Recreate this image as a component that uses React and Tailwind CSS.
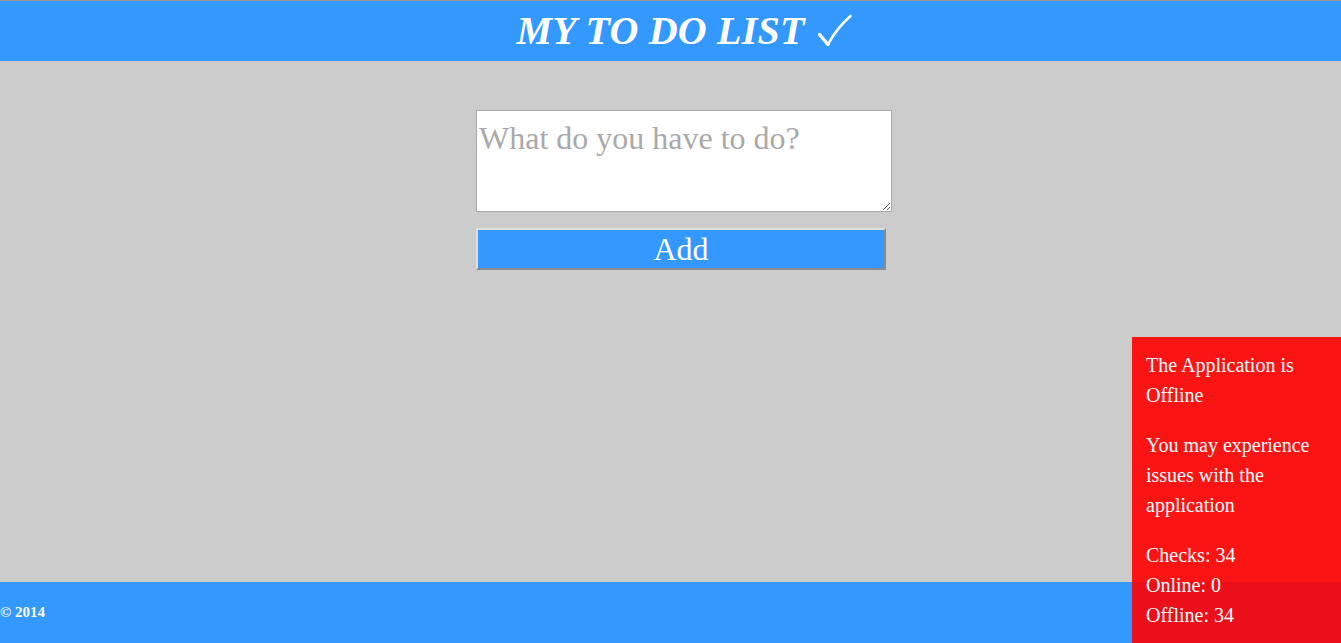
import React from 'react';

const serif = "font-['Liberation_Serif','Times_New_Roman',serif]";

function CheckMark() {
    return (
        <svg
            width="34"
            height="32"
            viewBox="0 0 34 32"
            className="inline-block align-[-2px] ml-[13px]"
            fill="none"
        >
            <path d="M1.5 20.5 L10 30.5" stroke="white" strokeWidth="3.4" strokeLinecap="round" />
            <path d="M10 30.5 Q18 15 32.5 2" stroke="white" strokeWidth="2.6" strokeLinecap="round" />
        </svg>
    );
}

export default function App() {
    return (
        <div className={`relative h-[643px] flex flex-col bg-[#cccccc] ${serif}`}>
            {/* Header */}
            <header className="h-[61px] border-t border-[#9a9a9a] bg-[#3399ff] flex items-center justify-center pl-[27px]">
                <h1 className="text-[40px] font-bold italic text-white leading-none tracking-[0.2px]">
                    MY TO DO LIST<CheckMark />
                </h1>
            </header>

            {/* Form */}
            <main className="flex-1 flex flex-col items-center pt-[49px] pl-[27px]">
                <div className="w-[416px] flex flex-col">
                    <textarea
                        placeholder="What do you have to do?"
                        className="w-[416px] h-[102px] border border-[#a9a9a9] bg-white px-[2px] pt-[7px] pb-[2px] text-[32px] leading-tight text-black placeholder:text-[#a9a9a9] outline-none"
                    />
                    <button className="mt-[16px] w-[410px] h-[42px] bg-[#3399ff] text-white text-[32px] leading-none border-2 border-t-[#e0e0e0] border-l-[#e0e0e0] border-b-[#8a8a8a] border-r-[#8a8a8a]">
                        Add
                    </button>
                </div>
            </main>

            {/* Footer */}
            <footer className="h-[61px] bg-[#3399ff] flex items-center">
                <span className="text-[15px] font-bold text-white">© 2014</span>
            </footer>

            {/* Offline notice */}
            <div className="absolute right-0 bottom-0 w-[209px] bg-[rgba(255,0,0,0.9)] text-white text-[20px] leading-[30px] px-[14px] py-[13px]">
                <p>The Application is Offline</p>
                <p className="mt-[20px]">You may experience issues with the application</p>
                <p className="mt-[20px]">
                    Checks: 34<br />
                    Online: 0<br />
                    Offline: 34
                </p>
            </div>
        </div>
    );
}
